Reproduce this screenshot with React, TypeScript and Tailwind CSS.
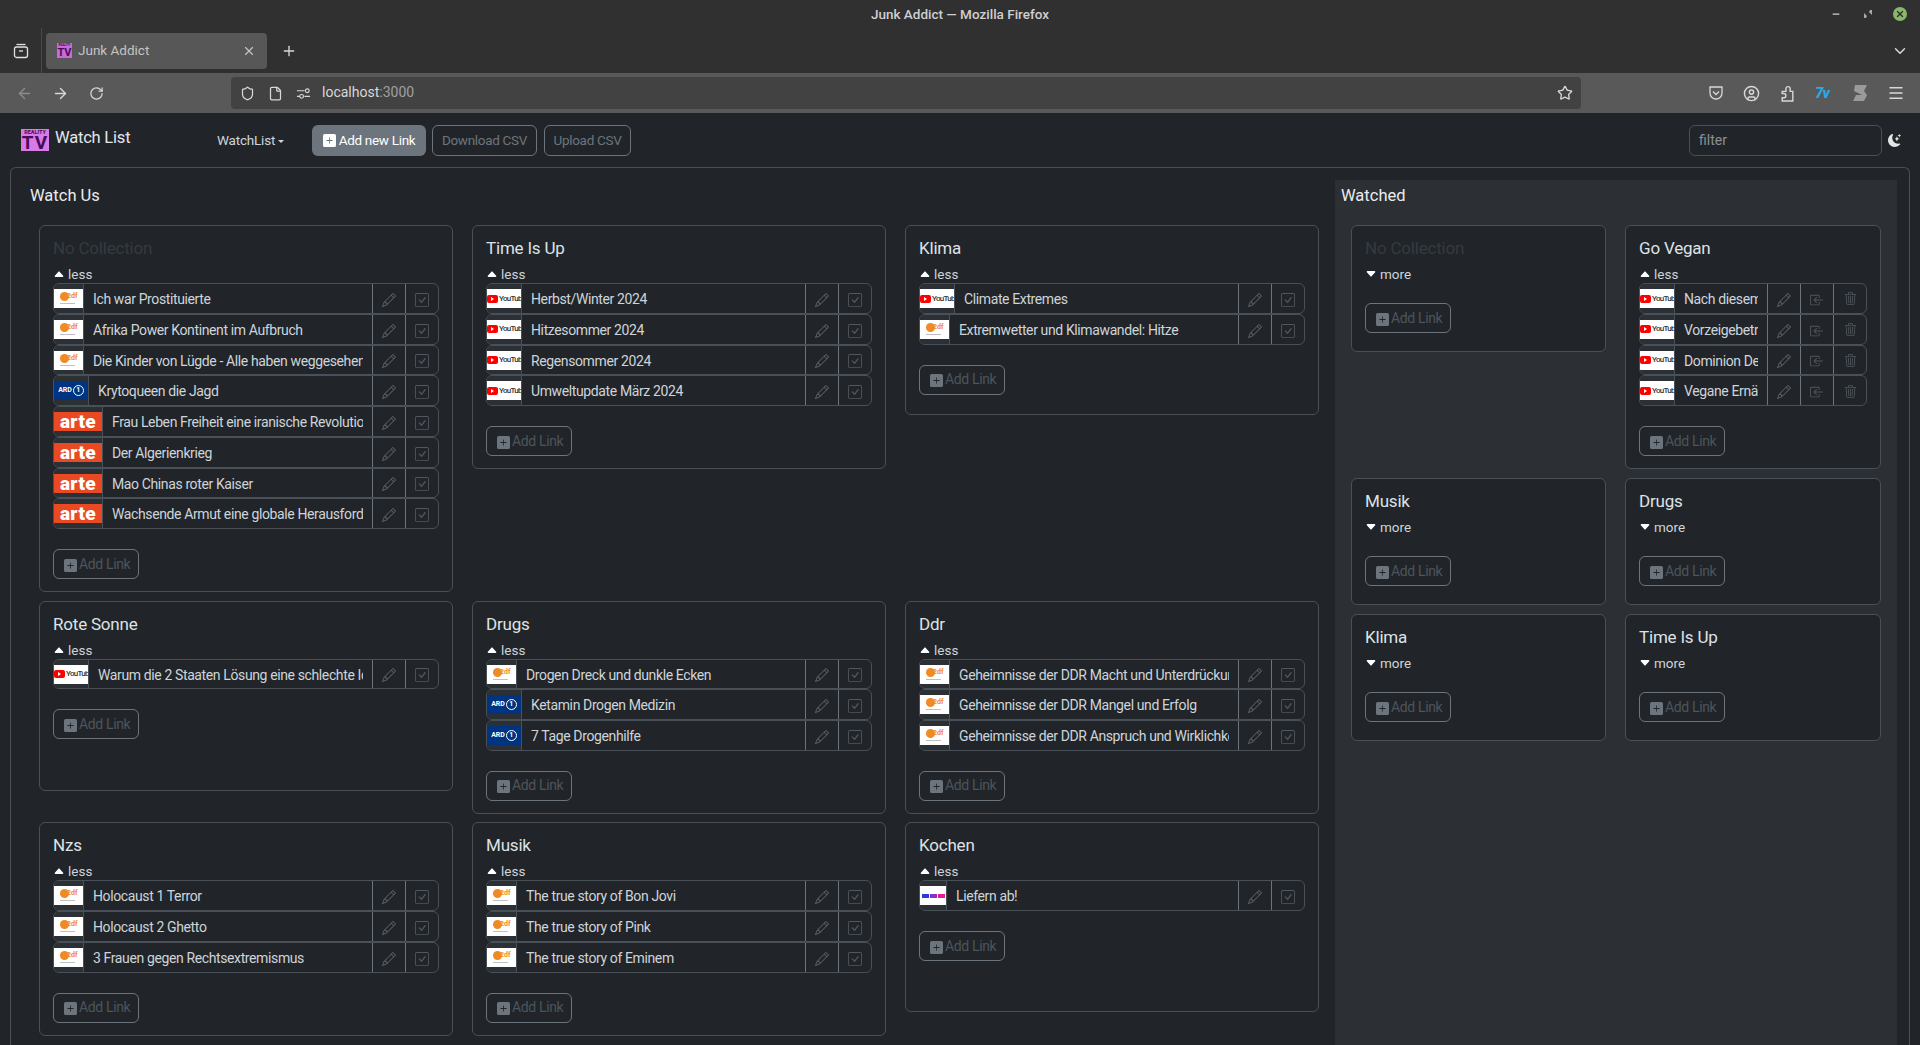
import { ArrowLeft, ArrowRight, ChevronDown, CircleUser, File, Menu, Minus, Plus, RotateCw, Shield, Star, X } from 'lucide-react';
import { BsBoxArrowInLeft, BsCaretDownFill, BsCaretUpFill, BsCheckSquare, BsMoonStarsFill, BsPencil, BsPlusSquareFill, BsTrash3 } from 'react-icons/bs';

type LogoKind = 'zdf' | 'ard' | 'arte' | 'yt' | 'rtl';
type Item = { logo: LogoKind; title: string };
type Collection = { name: string; dim?: boolean; open: boolean; items?: Item[] };

const watchUs: Collection[] = [
  {
    name: 'No Collection', dim: true, open: true, items: [
      { logo: 'zdf', title: 'Ich war Prostituierte' },
      { logo: 'zdf', title: 'Afrika Power Kontinent im Aufbruch' },
      { logo: 'zdf', title: 'Die Kinder von Lügde - Alle haben weggesehen' },
      { logo: 'ard', title: 'Krytoqueen die Jagd' },
      { logo: 'arte', title: 'Frau Leben Freiheit eine iranische Revolution' },
      { logo: 'arte', title: 'Der Algerienkrieg' },
      { logo: 'arte', title: 'Mao Chinas roter Kaiser' },
      { logo: 'arte', title: 'Wachsende Armut eine globale Herausforderung' },
    ],
  },
  {
    name: 'Time Is Up', open: true, items: [
      { logo: 'yt', title: 'Herbst/Winter 2024' },
      { logo: 'yt', title: 'Hitzesommer 2024' },
      { logo: 'yt', title: 'Regensommer 2024' },
      { logo: 'yt', title: 'Umweltupdate März 2024' },
    ],
  },
  {
    name: 'Klima', open: true, items: [
      { logo: 'yt', title: 'Climate Extremes' },
      { logo: 'zdf', title: 'Extremwetter und Klimawandel: Hitze' },
    ],
  },
  { name: 'Rote Sonne', open: true, items: [{ logo: 'yt', title: 'Warum die 2 Staaten Lösung eine schlechte Idee ist' }] },
  {
    name: 'Drugs', open: true, items: [
      { logo: 'zdf', title: 'Drogen Dreck und dunkle Ecken' },
      { logo: 'ard', title: 'Ketamin Drogen Medizin' },
      { logo: 'ard', title: '7 Tage Drogenhilfe' },
    ],
  },
  {
    name: 'Ddr', open: true, items: [
      { logo: 'zdf', title: 'Geheimnisse der DDR Macht und Unterdrückung' },
      { logo: 'zdf', title: 'Geheimnisse der DDR Mangel und Erfolg' },
      { logo: 'zdf', title: 'Geheimnisse der DDR Anspruch und Wirklichkeit' },
    ],
  },
  {
    name: 'Nzs', open: true, items: [
      { logo: 'zdf', title: 'Holocaust 1 Terror' },
      { logo: 'zdf', title: 'Holocaust 2 Ghetto' },
      { logo: 'zdf', title: '3 Frauen gegen Rechtsextremismus' },
    ],
  },
  {
    name: 'Musik', open: true, items: [
      { logo: 'zdf', title: 'The true story of Bon Jovi' },
      { logo: 'zdf', title: 'The true story of Pink' },
      { logo: 'zdf', title: 'The true story of Eminem' },
    ],
  },
  { name: 'Kochen', open: true, items: [{ logo: 'rtl', title: 'Liefern ab!' }] },
];

const watched: Collection[] = [
  { name: 'No Collection', dim: true, open: false },
  {
    name: 'Go Vegan', open: true, items: [
      { logo: 'yt', title: 'Nach diesem Film' },
      { logo: 'yt', title: 'Vorzeigebetrieb' },
      { logo: 'yt', title: 'Dominion Deutsch' },
      { logo: 'yt', title: 'Vegane Ernährung' },
    ],
  },
  { name: 'Musik', open: false },
  { name: 'Drugs', open: false },
  { name: 'Klima', open: false },
  { name: 'Time Is Up', open: false },
];

function TvLogo({ small }: { small?: boolean }) {
  return (
    <div className={small ? 'flex h-[15px] w-[15px] shrink-0 flex-col items-center overflow-hidden bg-[#c66bd8] font-bold leading-none text-[#4a0a58]' : 'flex h-[22px] w-[28px] shrink-0 flex-col items-center overflow-hidden bg-[#d67be8] font-bold leading-none text-[#4a0a58]'}>
      <span className={small ? 'h-[4px] text-[3px] leading-[4px]' : 'h-[6px] text-[5.5px] leading-[6px]'}>REALITY</span>
      <span className={small ? 'text-[11px] leading-[11px]' : 'text-[19px] leading-[16px] tracking-[1px]'}>TV</span>
    </div>
  );
}

function Logo({ kind }: { kind: LogoKind }) {
  if (kind === 'zdf') {
    return (
      <div className="relative h-[19px] w-[29px] overflow-hidden bg-white">
        <div className="absolute left-[6px] top-[3px] h-[9px] w-[9px] rounded-full bg-[#f08a24]" />
        <span className="absolute left-[13px] top-[3px] text-[7px] font-bold leading-[8px] text-[#f08a24]">2df</span>
        <div className="absolute left-[6px] top-[14px] h-[1px] w-[15px] bg-[#c0c0c0]" />
      </div>
    );
  }
  if (kind === 'ard') {
    return (
      <div className="flex h-[19px] w-[34px] items-center justify-center gap-[1px] overflow-hidden bg-[#003480] text-white">
        <span className="text-[7px] font-bold leading-none">ARD</span>
        <span className="flex h-[11px] w-[11px] items-center justify-center rounded-full border-[1.5px] border-white text-[7px] font-bold leading-none">1</span>
      </div>
    );
  }
  if (kind === 'arte') {
    return <div className="flex h-[19px] w-[48px] items-center justify-center overflow-hidden bg-[#e94a24] text-[19px] font-black leading-none tracking-[0.4px] text-white">arte</div>;
  }
  if (kind === 'yt') {
    return (
      <div className="flex h-[19px] w-[34px] items-center overflow-hidden bg-white">
        <div className="flex h-[8px] w-[11px] shrink-0 items-center justify-center rounded-[2px] bg-[#f00]">
          <div className="h-0 w-0 border-y-[2px] border-l-[3px] border-y-transparent border-l-white" />
        </div>
        <span className="ml-[1px] shrink-0 text-[8px] font-medium leading-none tracking-[-0.7px] text-[#333]">YouTube</span>
      </div>
    );
  }
  return (
    <div className="flex h-[19px] w-[26px] items-center justify-center gap-[1px] bg-white">
      <div className="h-[4px] w-[7px] bg-[#2a3fd8]" />
      <div className="h-[4px] w-[7px] bg-[#8a2fc8]" />
      <div className="h-[4px] w-[7px] bg-[#ee1a8c]" />
    </div>
  );
}

function LinkRow({ item, inWatched }: { item: Item; inWatched: boolean }) {
  return (
    <div className="flex h-[30.75px] overflow-hidden rounded-[6px] border border-[#495057]">
      <div className="shrink-0 border-r border-[#495057] bg-[#2b3035] pt-[5px]">
        <Logo kind={item.logo} />
      </div>
      <div className="mr-[9px] min-w-0 flex-1 overflow-hidden whitespace-nowrap pl-[9px] text-[14px] leading-[30px] tracking-[-0.38px] text-[#ced4da]">{item.title}</div>
      <div className="flex w-[33px] shrink-0 items-center justify-center border-l border-[#6c757d] pt-[3px] text-[#5c636a]">
        <BsPencil size={14} />
      </div>
      <div className="flex w-[33px] shrink-0 items-center justify-center border-l border-[#6c757d] pt-[3px] text-[#50575e]">
        {inWatched ? <BsBoxArrowInLeft size={14} /> : <BsCheckSquare size={14} />}
      </div>
      {inWatched && (
        <div className="flex w-[33px] shrink-0 items-center justify-center border-l border-[#6c757d] pt-[1px] text-[#50575e]">
          <BsTrash3 size={13} />
        </div>
      )}
    </div>
  );
}

function CollectionCard({ c, inWatched }: { c: Collection; inWatched: boolean }) {
  return (
    <div className={inWatched ? 'min-h-[127px] rounded-[6px] border border-[#495057] bg-[#212529] px-[13px] pb-[12px] pt-[10px]' : 'min-h-[190px] rounded-[6px] border border-[#495057] bg-[#212529] px-[13px] pb-[12px] pt-[10px]'}>
      <div className={c.dim ? 'h-[24px] text-[17px] leading-[24px] tracking-[-0.2px] text-[#343a40]' : 'h-[24px] text-[17px] leading-[24px] tracking-[-0.2px] text-[#dee2e6]'}>{c.name}</div>
      <div className="mt-[5px] flex h-[18px] items-center gap-[3px] text-[13.5px] leading-[18px] text-[#ced4da]">
        <span className="text-white">{c.open ? <BsCaretUpFill size={12} /> : <BsCaretDownFill size={12} />}</span>
        <span>{c.open ? 'less' : 'more'}</span>
      </div>
      {c.items && (
        <div>
          {c.items.map(item => <LinkRow key={item.title} item={item} inWatched={inWatched} />)}
        </div>
      )}
      <div className="mt-[20px] flex h-[30px] w-[86px] items-center gap-[2px] rounded-[6px] border border-[#6c757d] pl-[10px] text-[14px] tracking-[-0.35px] text-[#4d545b]">
        <BsPlusSquareFill size={13} className="mt-[2px] shrink-0 text-[#6c757d]" />
        <span>Add Link</span>
      </div>
    </div>
  );
}

function BrowserChrome() {
  return (
    <div className="shrink-0 bg-[#303030] text-[#d8d8d8]">
      <div className="relative flex h-[28px] items-center justify-center text-[13.5px] font-medium text-[#cfcfcf]">
        Junk Addict — Mozilla Firefox
        <Minus size={10} className="absolute left-[1831px] top-[9px]" strokeWidth={3} />
        <svg width="8" height="8" viewBox="0 0 8 8" className="absolute left-[1864px] top-[10px] text-[#a8a8a8]" fill="currentColor">
          <path d="M0 8V3l3 3 3-6h2v5L5 2 2 8z" />
        </svg>
        <div className="absolute left-[1893px] top-[7px] flex h-[14px] w-[14px] items-center justify-center rounded-full bg-[#8ab66b] text-[#2a2a2a]">
          <X size={10} strokeWidth={3} />
        </div>
      </div>
      <div className="flex h-[45px] items-center">
        <div className="flex h-full w-[42px] items-center justify-center border-r border-[#4a4a4a]">
          <svg width="16" height="16" viewBox="0 0 16 16" fill="none" stroke="#e0e0e0" strokeWidth="1.3">
            <path d="M3.5 1.5h9" />
            <rect x="1.5" y="4" width="13" height="10.5" rx="2" />
            <path d="M6 8h4" />
          </svg>
        </div>
        <div className="ml-[4px] flex h-[36px] w-[221px] items-center rounded-[4px] bg-[#575757] pl-[11px] pr-[11px] text-[13.5px] text-[#c4c4c4]">
          <TvLogo small />
          <span className="ml-[6px] flex-1">Junk Addict</span>
          <X size={14} />
        </div>
        <Plus size={16} className="ml-[14px]" />
        <ChevronDown size={18} className="ml-auto mr-[11px]" />
      </div>
      <div className="flex h-[40px] items-center bg-[#595959]">
        <ArrowLeft size={17} className="ml-[16px] text-[#8d8d8d]" />
        <ArrowRight size={17} className="ml-[19px]" />
        <RotateCw size={15} className="ml-[20px]" />
        <div className="ml-[127px] flex h-[32px] w-[1350px] items-center rounded-[4px] bg-[#424242] pl-[9px] pr-[8px] text-[14px]">
          <Shield size={15} />
          <File size={15} className="ml-[13px]" />
          <svg width="15" height="15" viewBox="0 0 16 16" fill="none" stroke="currentColor" strokeWidth="1.2" className="ml-[13px]">
            <path d="M1 5h8M1 11h3M9 11h6" />
            <circle cx="12" cy="5" r="2" />
            <circle cx="6" cy="11" r="2" />
          </svg>
          <span className="ml-[11px] mb-[1px]">localhost<span className="text-[#a0a0a0]">:3000</span></span>
          <Star size={16} className="ml-auto" />
        </div>
        <svg width="16" height="16" viewBox="0 0 16 16" fill="none" stroke="currentColor" strokeWidth="1.3" className="ml-[127px]">
          <path d="M2 2h12a1 1 0 0 1 0 1v5a6 6 0 0 1-12 0V3a1 1 0 0 1 0-1z" />
          <path d="M5 6.5l3 3 3-3" />
        </svg>
        <CircleUser size={17} className="ml-[19px]" />
        <svg width="17" height="17" viewBox="0 0 16 16" fill="none" stroke="currentColor" strokeWidth="1.3" className="ml-[19px]">
          <path d="M3 6h3.5V3.5a2 2 0 0 1 4 0V6H13v9H3v-3h1.5a2 2 0 0 0 0-4H3z" />
        </svg>
        <span className="ml-[19px] w-[17px] text-[15px] font-extrabold italic leading-none tracking-[-1px] text-[#29a9e8]">7v</span>
        <svg width="18" height="18" viewBox="0 0 18 18" className="ml-[19px] text-[#9a9a9a]" fill="currentColor">
          <path d="M4 1h12l-3 6H15l-2 0 3 4-3 6H2l3-6h6L3 7z" />
        </svg>
        <Menu size={18} className="ml-[18px]" />
      </div>
    </div>
  );
}

export default function App() {
  return (
    <div className="flex h-screen flex-col overflow-hidden bg-[#212529] font-['Roboto',sans-serif] text-[#dee2e6]">
      <BrowserChrome />
      <nav className="flex h-[54px] shrink-0 items-center pl-[21px] pr-[19px]">
        <div className="flex w-[196px] shrink-0 items-center">
          <TvLogo />
          <span className="ml-[6px] mt-[-4px] text-[16.5px] leading-none tracking-[-0.2px] text-[#e2e6ea]">Watch List</span>
        </div>
        <div className="flex w-[95px] shrink-0 items-center gap-[3px] text-[13.5px] tracking-[-0.2px] text-[#ced4da]">
          WatchList
          <span className="mt-[2px] h-0 w-0 border-x-[3px] border-t-[3px] border-x-transparent border-t-[#ced4da]" />
        </div>
        <button className="flex h-[31px] w-[114px] items-center justify-center gap-[3px] rounded-[6px] bg-[#6c757d] text-[13.5px] tracking-[-0.3px] text-white">
          <BsPlusSquareFill size={13} />
          Add new Link
        </button>
        <button className="ml-[6px] h-[31px] w-[105px] rounded-[6px] border border-[#6c757d] text-[13.5px] tracking-[-0.3px] text-[#6c757d]">Download CSV</button>
        <button className="ml-[7px] h-[31px] w-[87px] rounded-[6px] border border-[#6c757d] text-[13.5px] tracking-[-0.3px] text-[#6c757d]">Upload CSV</button>
        <div className="ml-auto flex h-[31px] w-[193px] items-center rounded-[6px] border border-[#495057] pl-[9px] text-[14px] text-[#8a9096]">filter</div>
        <BsMoonStarsFill size={13} className="ml-[6px] text-[#e6e6e6]" />
      </nav>
      <main className="mx-[10px] flex min-h-0 flex-1 rounded-t-[6px] border border-b-0 border-[#495057]">
        <section className="w-[1324px] shrink-0 pl-[19px] pt-[17px]">
          <h2 className="mb-[18px] h-[22px] text-[16.5px] leading-[22px] text-[#e9ecef]">Watch Us</h2>
          <div className="ml-[9px] grid grid-cols-[414px_414px_414px] items-start gap-x-[19px] gap-y-[8.5px]">
            {watchUs.map(c => <CollectionCard key={c.name} c={c} inWatched={false} />)}
          </div>
        </section>
        <section className="mt-[12px] w-[562px] shrink-0 bg-[#2c2f34] pl-[6px] pt-[5px]">
          <h2 className="mb-[18px] h-[22px] text-[16.5px] leading-[22px] text-[#e9ecef]">Watched</h2>
          <div className="ml-[10px] grid grid-cols-[255px_256px] items-start gap-x-[19px] gap-y-[9px]">
            {watched.map(c => <CollectionCard key={c.name} c={c} inWatched />)}
          </div>
        </section>
      </main>
    </div>
  );
}
